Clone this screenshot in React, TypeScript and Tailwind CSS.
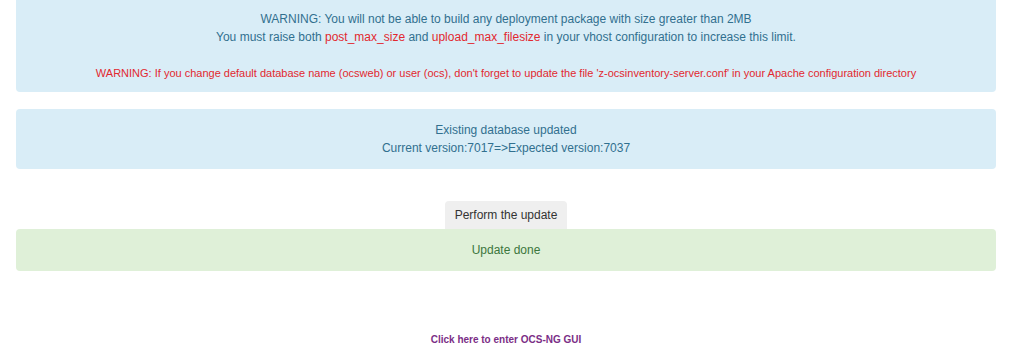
import React from 'react';

const App = () => {
  return (
    <div className="w-[1024px] h-[353px] bg-white font-['Liberation_Sans',Arial,sans-serif] text-[12px] leading-[18px] overflow-hidden">
      <div className="w-[980px] ml-4">
        {/* Warning box */}
        <div className="bg-[#d9edf7] text-[#31708f] text-center rounded-b pt-[10px] pb-[10px]">
          WARNING: You will not be able to build any deployment package with size greater than 2MB
          <br />
          You must raise both <span className="text-[#e2282f]">post_max_size</span> and{' '}
          <span className="text-[#e2282f]">upload_max_filesize</span> in your vhost configuration to increase this limit.
          <br />
          <br />
          <span className="text-[#e2282f] text-[11px]">
            WARNING: If you change default database name (ocsweb) or user (ocs), don't forget to update the file
            'z-ocsinventory-server.conf' in your Apache configuration directory
          </span>
        </div>

        {/* Database status */}
        <div className="mt-[17px] bg-[#d9edf7] text-[#31708f] text-center rounded py-[12px]">
          Existing database updated
          <br />
          Current version:7017=&gt;Expected version:7037
        </div>

        <div className="mt-[32px] flex justify-center">
          <button className="bg-[#efefef] text-[#333] rounded-t px-[10px] h-[28px]">Perform the update</button>
        </div>

        <div className="bg-[#dff0d8] text-[#3c763d] text-center rounded py-[12px] h-[42px]">Update done</div>

        <div className="mt-[59px] text-center">
          <a href="#" className="text-[#7b2e86] font-bold text-[10px]">
            Click here to enter OCS-NG GUI
          </a>
        </div>
      </div>
    </div>
  );
};

export default App;
